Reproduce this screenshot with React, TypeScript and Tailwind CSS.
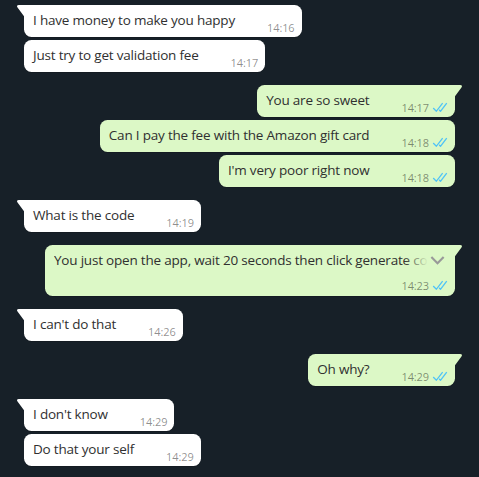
const font = { fontFamily: '"Open Sans", "Noto Sans", sans-serif' };

type Msg = { text: string; time: string };
type Group = { out: boolean; msgs: Msg[] };

const groups: Group[] = [
  {
    out: false,
    msgs: [
      { text: "I have money to make you happy", time: "14:16" },
      { text: "Just try to get validation fee", time: "14:17" },
    ],
  },
  {
    out: true,
    msgs: [
      { text: "You are so sweet", time: "14:17" },
      { text: "Can I pay the fee with the Amazon gift card", time: "14:18" },
      { text: "I'm very poor right now", time: "14:18" },
    ],
  },
  { out: false, msgs: [{ text: "What is the code", time: "14:19" }] },
  {
    out: true,
    msgs: [
      {
        text: "You just open the app, wait 20 seconds then click generate code",
        time: "14:23",
      },
    ],
  },
  { out: false, msgs: [{ text: "I can't do that", time: "14:26" }] },
  { out: true, msgs: [{ text: "Oh why?", time: "14:29" }] },
  {
    out: false,
    msgs: [
      { text: "I don't know", time: "14:29" },
      { text: "Do that your self", time: "14:29" },
    ],
  },
];

const DoubleCheck = () => (
  <svg viewBox="0 0 16 15" width="16" height="15" className="ml-[3px] shrink-0">
    <path
      fill="#4fc3f7"
      d="M15.01 3.316l-.478-.372a.365.365 0 0 0-.51.063L8.666 9.879a.32.32 0 0 1-.484.033l-.358-.325a.319.319 0 0 0-.484.032l-.378.483a.418.418 0 0 0 .036.541l1.32 1.266c.143.14.361.125.484-.033l6.272-8.048a.366.366 0 0 0-.064-.512zm-4.1 0l-.478-.372a.365.365 0 0 0-.51.063L4.566 9.879a.32.32 0 0 1-.484.033L1.891 7.769a.366.366 0 0 0-.515.006l-.423.433a.364.364 0 0 0 .006.514l3.258 3.185c.143.14.361.125.484-.033l6.272-8.048a.365.365 0 0 0-.063-.51z"
    />
  </svg>
);

const Tail = ({ out }: { out: boolean }) =>
  out ? (
    <svg viewBox="0 1 8 12" width="8" height="12" className="absolute top-0 -right-[8px]">
      <path fill="#dcf8c6" d="M5.188 1H0v11.193l6.467-8.625C7.526 2.156 6.958 1 5.188 1z" />
    </svg>
  ) : (
    <svg viewBox="0 1 8 12" width="8" height="12" className="absolute top-0 -left-[8px]">
      <path fill="#ffffff" d="M1.533 3.568L8 12.193V1H2.812C1.042 1 .474 2.156 1.533 3.568z" />
    </svg>
  );

const Meta = ({ time, out }: { time: string; out: boolean }) => (
  <div className="flex items-center h-[15px] shrink-0">
    <span className="text-[11px] leading-[15px] tracking-[-0.1px] text-[rgba(0,0,0,0.45)]">{time}</span>
    {out && <DoubleCheck />}
  </div>
);

const Bubble = ({ msg, out, first }: { msg: Msg; out: boolean; first: boolean }) => {
  const bg = out ? "bg-[#dcf8c6]" : "bg-white";
  const corner = first ? (out ? "rounded-tr-none" : "rounded-tl-none") : "";
  return (
    <div
      className={`relative flex items-end rounded-[7.5px] pt-[6px] pb-[7px] pl-[9px] pr-[7px] shadow-[0_1px_0.5px_rgba(0,0,0,0.13)] ${bg} ${corner}`}
    >
      {first && <Tail out={out} />}
      <span className="text-[13.5px] leading-[19px] tracking-[-0.2px] text-[#303030] whitespace-nowrap">
        {msg.text}
      </span>
      <div className="ml-[32px] mb-[-5px]">
        <Meta time={msg.time} out={out} />
      </div>
    </div>
  );
};

const LongBubble = ({ msg }: { msg: Msg }) => (
  <div className="relative w-[410px] rounded-[7.5px] rounded-tr-none bg-[#dcf8c6] pt-[6px] pb-[3px] pl-[9px] pr-[7px] shadow-[0_1px_0.5px_rgba(0,0,0,0.13)]">
    <Tail out />
    <div className="overflow-hidden whitespace-nowrap text-[13.5px] leading-[19px] tracking-[-0.2px] text-[#303030]">
      {msg.text}
    </div>
    <div className="mt-[8px] flex justify-end">
      <Meta time={msg.time} out />
    </div>
    <div className="absolute top-[3px] right-[3px] flex h-[24px] w-[48px] items-center justify-end bg-gradient-to-r from-[rgba(220,248,198,0)] via-[#dcf8c6] via-50% to-[#dcf8c6] pr-[6px]">
      <svg viewBox="0 0 18 18" width="17" height="17">
        <path fill="#999999" d="M3.3 4.6L9 10.3l5.7-5.7 1.6 1.6L9 13.4 1.7 6.2l1.6-1.6z" />
      </svg>
    </div>
  </div>
);

export default function App() {
  return (
    <div className="w-[479px] h-[477px] overflow-hidden bg-[#172028]" style={font}>
      <div className="flex flex-col gap-[13px] px-[24px] pt-[5px]">
        {groups.map((g, gi) => (
          <div key={gi} className={`flex flex-col gap-[3px] ${g.out ? "items-end" : "items-start"}`}>
            {g.msgs.map((m, mi) =>
              m.text.length > 50 ? (
                <LongBubble key={mi} msg={m} />
              ) : (
                <Bubble key={mi} msg={m} out={g.out} first={mi === 0} />
              )
            )}
          </div>
        ))}
      </div>
    </div>
  );
}
